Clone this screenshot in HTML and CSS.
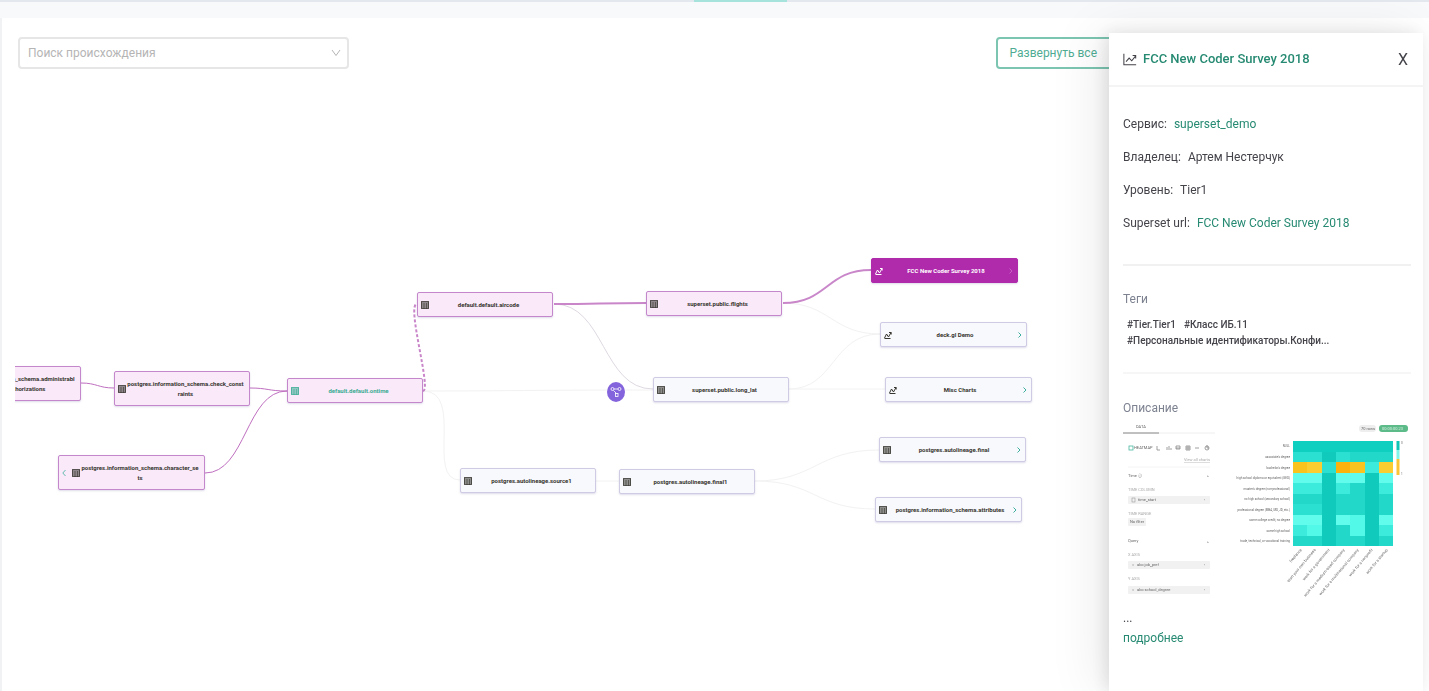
FILE: index.html
```html
<!DOCTYPE html>
<html lang="ru">
  <head>
    <meta charset="utf-8" />
    <title>Lineage</title>
    <link rel="stylesheet" href="styles.css">
  </head>
  <body>
    <!-- shared icons -->
    <svg class="sprite" aria-hidden="true">
      <symbol id="table" viewBox="0 0 8 8">
        <rect x="0.5" y="0.5" width="7" height="7" fill="currentColor" fill-opacity="0.35" stroke="currentColor" stroke-opacity="0.8" />
        <path d="M0 2h8M0 4h8M0 6h8M3 2v6M5.5 2v6" stroke="currentColor" stroke-width="0.6" />
      </symbol>
      <symbol id="chart" viewBox="0 0 16 16">
        <path d="M1 2v12.500H15M3.500 11l3.500-4 3 3 4.500-5.500M11 4h3.500v3.500" fill="none" stroke="currentColor" stroke-width="1.200" />
      </symbol>
      <symbol id="spark" viewBox="0 0 8 8">
        <path d="M0.500 7l2-4 2 3 2.500-4.500M5 1.500h2.200v2M0.500 7.500h6" fill="none" stroke="currentColor" stroke-width="1" />
      </symbol>
      <symbol id="right" viewBox="0 0 4 8">
        <path d="M0.500 1.500L3 4 0.500 6.500" fill="none" stroke="currentColor" />
      </symbol>
      <symbol id="left" viewBox="0 0 4 8">
        <path d="M3.500 1L0.800 4 3.500 7" fill="none" stroke="currentColor" stroke-width="0.800" />
      </symbol>
    </svg>

    <div class="tabs"><span class="tab-ink"></span></div>

    <main class="panel">
      <div class="toolbar">
        <div class="search">
          <select aria-label="Поиск происхождения">
            <option>Поиск происхождения</option>
          </select>
          <svg class="search-arrow" viewBox="0 0 10 10"><path d="M1 2l4 5.500L9 2" fill="none" stroke="currentColor" /></svg>
        </div>
        <button class="expand" type="button">Развернуть все</button>
      </div>

      <div class="lineage">
        <svg class="edges" viewBox="15 70 1100 600" width="1100" height="600">
          <g class="edge">
            <path d="M423 391C500 391 540 390 653 390" />
            <path d="M423 391C465 391 425 480 460 480" />
            <path d="M554 304C605 304 602 389 653 389" class="mid" />
            <path d="M596 481H619" />
            <path d="M783 303C830 303 832 334 880 334" />
            <path d="M789 389C835 389 832 334 880 334" />
            <path d="M789 389H885" />
            <path d="M755 481C815 481 817 450 879 450" />
            <path d="M755 481C815 481 815 509 875 509" />
          </g>
          <g class="edge-on">
            <path d="M81 383C97 383 98 388 114 388" />
            <path d="M250 388C268 388 268 391 287 391" />
            <path d="M205 473C246 473 246 391 287 391" />
            <path d="M423 391C432 391 406 304 417 304" class="dashed" />
            <path d="M554 304C600 304 600 303 646 303" class="wide" />
            <path d="M783 303C828 303 826 270 871 270" class="wide" />
          </g>
        </svg>

        <div class="node on n-admin"><svg class="ico"><use href="#table" /></svg><span>postgres.information_schema.administrabl<br>e_role_authorizations</span></div>
        <div class="node on n-check"><svg class="ico"><use href="#table" /></svg><span>postgres.information_schema.check_const<br>raints</span></div>
        <div class="node on n-char"><svg class="arrow"><use href="#left" /></svg><svg class="ico"><use href="#table" /></svg><span>postgres.information_schema.character_se<br>ts</span></div>
        <div class="node on current n-ontime"><svg class="ico"><use href="#table" /></svg><span>default.default.ontime</span></div>
        <div class="node on n-aircode"><svg class="ico"><use href="#table" /></svg><span>default.default.aircode</span></div>
        <div class="node on n-flights"><svg class="ico"><use href="#table" /></svg><span>superset.public.flights</span></div>
        <div class="node n-longlat"><svg class="ico"><use href="#table" /></svg><span>superset.public.long_lat</span></div>
        <div class="node n-source"><svg class="ico"><use href="#table" /></svg><span>postgres.autolineage.source1</span></div>
        <div class="node n-final1"><svg class="ico"><use href="#table" /></svg><span>postgres.autolineage.final1</span></div>
        <div class="node selected n-fcc"><svg class="ico"><use href="#spark" /></svg><span>FCC New Coder Survey 2018</span><svg class="arrow"><use href="#right" /></svg></div>
        <div class="node n-deck"><svg class="ico"><use href="#spark" /></svg><span>deck.gl Demo</span><svg class="arrow"><use href="#right" /></svg></div>
        <div class="node n-misc"><svg class="ico"><use href="#spark" /></svg><span>Misc Charts</span><svg class="arrow"><use href="#right" /></svg></div>
        <div class="node n-final"><svg class="ico"><use href="#table" /></svg><span>postgres.autolineage.final</span><svg class="arrow"><use href="#right" /></svg></div>
        <div class="node n-attr"><svg class="ico"><use href="#table" /></svg><span>postgres.information_schema.attributes</span><svg class="arrow"><use href="#right" /></svg></div>

        <button class="pipeline" type="button" aria-label="Pipeline">
          <svg viewBox="0 0 12 12" width="12" height="12" fill="none" stroke="#fff" stroke-width="0.8">
            <circle cx="2.500" cy="3" r="1.500" /><circle cx="9.500" cy="3" r="1.500" /><rect x="5.500" y="7.500" width="2.500" height="3" />
            <path d="M4 3h4M3.500 4.500l3 3" />
          </svg>
        </button>
      </div>
    </main>

    <aside class="drawer">
      <header class="drawer-head">
        <svg class="drawer-icon"><use href="#chart" /></svg>
        <a href="#">FCC New Coder Survey 2018</a>
        <button class="close" type="button">X</button>
      </header>
      <div class="drawer-body">
        <dl class="info">
          <div><dt>Сервис:</dt><dd><a href="#">superset_demo</a></dd></div>
          <div><dt>Владелец:</dt><dd>Артем Нестерчук</dd></div>
          <div><dt>Уровень:</dt><dd>Tier1</dd></div>
          <div><dt>Superset url:</dt><dd><a href="#">FCC New Coder Survey 2018</a></dd></div>
        </dl>
        <section class="tags">
          <h2>Теги</h2>
          <p><span>#Tier.Tier1</span><span>#Класс ИБ.11</span><span>#Персональные идентификаторы.Конфи...</span></p>
        </section>
        <section class="description">
          <h2>Описание</h2>
          <!-- chart preview -->
          <svg class="preview" viewBox="1123 418 288 182">
            <g class="controls">
              <text x="1136" y="428">DATA</text>
              <path d="M1123 433h92" stroke="#eee" /><path d="M1123 433h36" stroke="#888" />
              <rect x="1129" y="446" width="4" height="4" fill="none" stroke="#4ab8a0" stroke-width="0.800" />
              <text x="1134" y="449">HEATMAP</text>
              <g fill="none" stroke="#888" stroke-width="0.800">
                <path d="M1157 446v4h3M1167 450v-3M1169 450v-4M1171 450v-2M1176 446h4v3h-4zM1176 448h4M1186 446h4v4h-4zM1186 448h4M1188 446v4M1195 448h4" />
                <circle cx="1207" cy="448" r="2" /><path d="M1207 445v3h2" />
              </g>
              <text x="1210" y="461" text-anchor="end" class="pale" text-decoration="underline">View all charts</text>
              <path d="M1128 467h82" stroke="#f4f4f4" />
              <text x="1128" y="477">Time ⓘ</text><text x="1207" y="478">^</text>
              <text x="1128" y="491" class="pale">TIME COLUMN</text>
              <rect x="1128" y="496" width="82" height="8" rx="1" fill="#f1f1f1" />
              <rect x="1132" y="498" width="3" height="4" fill="none" stroke="#999" stroke-width="0.600" />
              <text x="1138" y="501">time_start</text><text x="1204" y="501">›</text>
              <text x="1128" y="515" class="pale">TIME RANGE</text>
              <rect x="1128" y="518" width="18" height="8" rx="1" fill="#f1f1f1" />
              <text x="1130" y="523">No filter</text>
              <text x="1128" y="542">Query</text><text x="1207" y="544">^</text>
              <text x="1128" y="556" class="pale">X AXIS</text>
              <rect x="1128" y="561" width="82" height="8" rx="1" fill="#f1f1f1" />
              <text x="1132" y="566" class="pale">×</text><text x="1137" y="566">abc job_pref</text><text x="1204" y="566">›</text>
              <text x="1128" y="580" class="pale">Y AXIS</text>
              <rect x="1128" y="586" width="82" height="8" rx="1" fill="#f1f1f1" />
              <text x="1132" y="591" class="pale">×</text><text x="1137" y="591">abc school_degree</text><text x="1204" y="591">›</text>

              <rect x="1359" y="425" width="17" height="7" rx="3" fill="#eee" /><text x="1361" y="430">70 rows</text>
              <rect x="1379" y="425" width="29" height="7" rx="3" fill="#5dba89" /><text x="1382" y="430" class="light">00:00:00.23</text>
            </g>

            <g text-anchor="end">
              <text x="1290" y="447">NULL</text>
              <text x="1290" y="458">associate's degree</text>
              <text x="1290" y="469">bachelor's degree</text>
              <text x="1290" y="479">high school diploma or equivalent (GED)</text>
              <text x="1290" y="490">master's degree (non-professional)</text>
              <text x="1290" y="500">no high school (secondary school)</text>
              <text x="1290" y="511">professional degree (MBA, MD, JD, etc.)</text>
              <text x="1290" y="521">some college credit, no degree</text>
              <text x="1290" y="532">some high school</text>
              <text x="1290" y="542">trade, technical, or vocational training</text>
            </g>

            <!-- heatmap, one unit per cell -->
            <g transform="translate(1293 441) scale(14.300 10.500)" shape-rendering="crispEdges">
              <rect width="7" height="10" fill="#22d8c9" />
              <path d="M0 0h7v1H0z" fill="#0fcfc0" />
              <path d="M0 1h2v1H0zM3 1h1v1H3zM0 6h2v1H0zM2 2h1v1H2z" fill="#2be0d1" />
              <path d="M0 3h2v1H0zM3 3h2v1H3zM6 3h1v1H6zM0 7h2v1H0zM3 7h1v1H3zM6 7h1v1H6z" fill="#62fcec" />
              <path d="M0 4h2v1H0zM3 4h1v1H3zM6 4h1v1H6zM0 8h1v1H0zM6 8h1v1H6zM5 2h1v1H5z" fill="#3debdc" />
              <path d="M1 8h1v1H1zM4 7h1v2H4z" fill="#52f8e8" />
              <path d="M2 1h1v1H2zM2 3h1v7H2zM5 3h1v7H5z" fill="#10cbbc" />
              <path d="M0 2h1v1H0zM4 2h1v1H4z" fill="#fbc31d" />
              <path d="M1 2h1v1H1zM6 2h1v1H6z" fill="#fccd31" />
              <path d="M3 2h1v1H3z" fill="#fbb20d" />
            </g>
            <path d="M1398 441v9" stroke="#10c5b6" stroke-width="3" />
            <path d="M1398 450v9" stroke="#80f5ea" stroke-width="3" />
            <path d="M1398 459v16" stroke="#fbc437" stroke-width="3" />
            <text x="1401" y="444">0</text><text x="1401" y="475">1</text>

            <g class="controls" text-anchor="end">
              <text transform="translate(1302 550) rotate(-50)">freelance</text>
              <text transform="translate(1316 550) rotate(-50)">start your own business</text>
              <text transform="translate(1330 550) rotate(-50)">work for a government</text>
              <text transform="translate(1345 550) rotate(-50)">work for a medium-sized company</text>
              <text transform="translate(1359 550) rotate(-50)">work for a multinational company</text>
              <text transform="translate(1373 550) rotate(-50)">work for a nonprofit</text>
              <text transform="translate(1388 550) rotate(-50)">work for a startup</text>
            </g>
          </svg>
          <p class="more">...</p>
          <a href="#">подробнее</a>
        </section>
      </div>
    </aside>
  </body>
</html>
```
FILE: styles.css
```css
* {
  box-sizing: border-box;
}
body {
  display: flex;
  flex-direction: column;
  min-height: 100vh;
  margin: 0;
  overflow: hidden;
  background-color: #f7f9fb;
  color: #45434a;
  font: 12px/20px Roboto, sans-serif;
}
a {
  color: #268a72;
  text-decoration: none;
}
button {
  font-family: inherit;
  cursor: pointer;
}
h2, p, dl, dd {
  margin: 0;
}
.sprite {
  position: absolute;
  width: 0;
  height: 0;
}

/* top strip */
.tabs {
  height: 18px;
  border-top: 2px solid #e3e7ee;
}
.tab-ink {
  display: block;
  width: 93px;
  height: 2px;
  margin: -2px auto 0;
  position: relative;
  left: 26px;
  background-color: #a5e3dc;
}
.panel {
  flex: 1;
  display: flex;
  flex-direction: column;
  border-left: 2px solid #f1f2f4;
  background-color: #fff;
}
.toolbar {
  display: flex;
  justify-content: space-between;
  padding: 19px 300px 0 16px;
}
.search {
  position: relative;
  width: 331px;
}
.search select {
  width: 100%;
  height: 32px;
  padding: 0 8px;
  appearance: none;
  border: 2px solid #e6e6e6;
  border-radius: 4px;
  background-color: #fff;
  color: #b5b5b5;
  font: inherit;
}
.search-arrow {
  position: absolute;
  top: 11px;
  right: 8px;
  width: 10px;
  height: 10px;
  color: #b5b5b5;
}
.expand {
  height: 32px;
  padding: 0 30px 0 12px;
  border: 2px solid #7cc5b1;
  border-radius: 4px;
  background-color: #fff;
  color: #4fac93;
  font-size: 12px;
}

/* graph */
.lineage {
  position: relative;
  flex: 1;
  margin: 1px 0 0 13px;
  overflow: hidden;
}
.edges {
  position: absolute;
  top: 0;
  left: 0;
  fill: none;
}
.edge {
  stroke: #f2f2f3;
}
.edge .mid {
  stroke: #dfd9e2;
}
.edge-on {
  stroke: #bf6fc0;
}
.edge-on .wide {
  stroke: #c987ca;
  stroke-width: 2;
}
.edge-on .dashed {
  stroke: #c987ca;
  stroke-width: 2;
  stroke-dasharray: 3 2;
}
.node {
  position: absolute;
  display: flex;
  align-items: center;
  width: 136px;
  height: 25px;
  padding: 0 4px 0 3px;
  border: 1px solid #cfcbe4;
  border-radius: 2px;
  background-color: #f8f9fc;
  box-shadow: 0 1px 2px rgba(90, 80, 150, 0.2);
  color: #37352f;
  font-size: 6px;
  font-weight: bold;
  line-height: 10px;
  text-align: center;
  white-space: nowrap;
}
.node span {
  flex: 1;
}
.ico {
  flex: none;
  width: 8px;
  height: 8px;
}
.arrow {
  flex: none;
  width: 4px;
  height: 8px;
  color: #3cae9c;
}
.on {
  border-color: #c487cb;
  background-color: #f9e9f9;
}
.current {
  color: #3bab93;
}
.selected {
  border-color: #b02aac;
  background-color: #b02aac;
  color: #fff;
}
.selected .arrow {
  color: #c95fc5;
}
.n-admin, .n-check, .n-char {
  height: 35px;
}
.n-char, .n-fcc, .n-deck, .n-misc, .n-final, .n-attr {
  width: 147px;
}
.n-char .arrow {
  margin-right: 6px;
}
.n-admin { left: -70px; top: 296px; }
.n-check { left: 99px; top: 301px; }
.n-char { left: 43px; top: 385px; }
.n-ontime { left: 272px; top: 308px; }
.n-aircode { left: 402px; top: 222px; }
.n-flights { left: 631px; top: 221px; }
.n-longlat { left: 638px; top: 307px; }
.n-source { left: 445px; top: 398px; }
.n-final1 { left: 604px; top: 399px; }
.n-fcc { left: 856px; top: 188px; }
.n-deck { left: 865px; top: 252px; }
.n-misc { left: 870px; top: 307px; }
.n-final { left: 864px; top: 367px; }
.n-attr { left: 860px; top: 427px; }
.pipeline {
  position: absolute;
  top: 312px;
  left: 592px;
  display: grid;
  place-items: center;
  width: 18px;
  height: 20px;
  padding: 0;
  border: 0;
  border-radius: 50%;
  background-color: #8464dc;
}

/* details */
.drawer {
  position: fixed;
  top: 33px;
  right: 6px;
  bottom: 0;
  width: 314px;
  background-color: #fff;
  box-shadow: -4px 0 16px rgba(0, 0, 0, 0.1), -12px 0 48px rgba(0, 0, 0, 0.08);
}
.drawer-head {
  display: flex;
  align-items: center;
  height: 54px;
  padding: 0 15px 0 14px;
  border-bottom: 2px solid #f4f4f4;
  font-size: 13px;
  font-weight: 500;
}
.drawer-icon {
  width: 14px;
  height: 14px;
  margin-right: 6px;
}
.close {
  margin-left: auto;
  padding: 0;
  border: 0;
  background: none;
  color: #45434a;
  font-size: 16px;
}
.drawer-body {
  padding: 27px 12px 0 14px;
}
.info {
  display: grid;
  gap: 13px;
  padding-bottom: 31px;
  border-bottom: 2px solid #f1f1f1;
}
.info div {
  display: flex;
  gap: 7px;
}
h2 {
  color: #7d8290;
  font-size: 12px;
  font-weight: normal;
}
.tags {
  padding: 23px 0;
  border-bottom: 2px solid #f6f6f6;
}
.tags p {
  display: flex;
  flex-wrap: wrap;
  column-gap: 8px;
  padding: 8px 4px 0;
  font-size: 10px;
  font-weight: 500;
  line-height: 16px;
}
.description {
  padding-top: 24px;
}
.preview {
  display: block;
  width: 100%;
  font-size: 3px;
  fill: #666;
}
.preview .controls {
  font-size: 4px;
}
.preview .pale {
  fill: #aaa;
}
.preview .light {
  fill: #d9f2e5;
}
.more {
  margin-top: 8px;
}
```
